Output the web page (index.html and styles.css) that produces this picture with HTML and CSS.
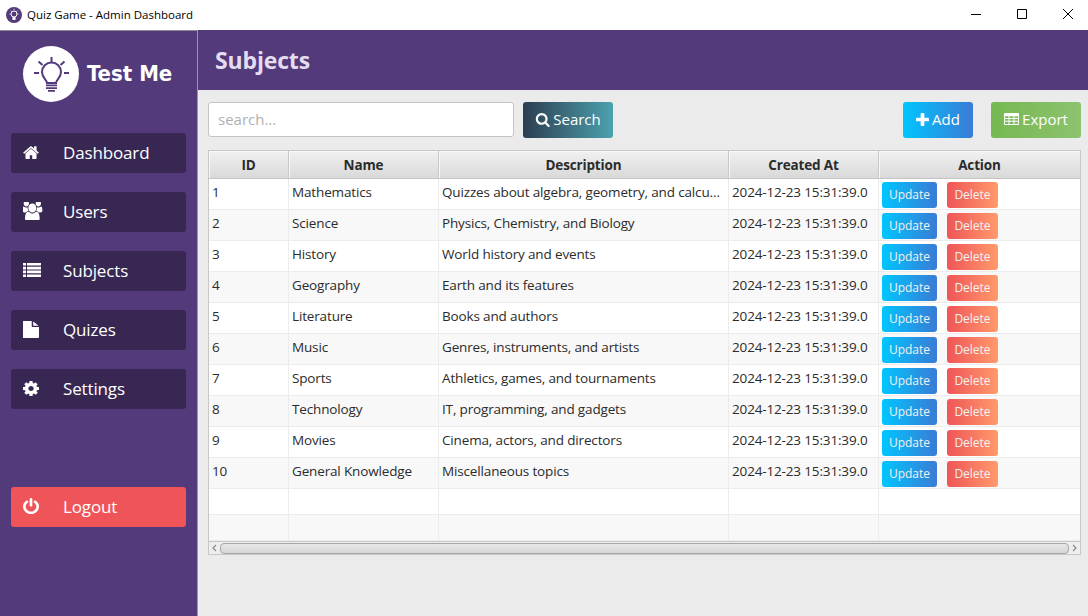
FILE: index.html
```html
<!DOCTYPE html>
<html>
  <head>
    <meta charset="utf-8" />
    <title>Quiz Game - Admin Dashboard</title>
    <link rel="stylesheet" href="styles.css">
  </head>
  <body>
    <svg class="sprite">
      <symbol id="i-home" viewBox="64 230 1664 1310" preserveAspectRatio="none"><path d="M1472 992v480q0 26-19 45t-45 19h-384v-384h-256v384h-384q-26 0-45-19t-19-45v-480q0-1 .5-3t.5-3l575-474 575 474q1 2 1 6zm223-69l-62 74q-8 9-21 11h-3q-13 0-21-7l-692-577-692 577q-12 8-24 7-13-2-21-11l-62-74q-8-10-7-23.500t11-21.500l719-599q32-26 76-26t76 26l244 204v-195q0-14 9-23t23-9h192q14 0 23 9t9 23v408l219 182q10 8 11 21.500t-7 23.500z"/></symbol>
      <symbol id="i-users" viewBox="0 128 1920 1536" preserveAspectRatio="none"><path d="M529 896q-162 5-265 128h-134q-82 0-138-40.500t-56-118.500q0-353 124-353 6 0 43.500 21t97.500 42.500 119 21.500q67 0 133-23-5 37-5 66 0 139 81 256zm1071 637q0 120-73 189.500t-194 69.500h-874q-121 0-194-69.500t-73-189.500q0-53 3.500-103.500t14-109 26.500-108.500 43-97.500 62-81 85.500-53.500 111.500-20q10 0 43 21.500t73 48 107 48 135 21.500 135-21.500 107-48 73-48 43-21.500q61 0 111.500 20t85.500 53.500 62 81 43 97.500 26.500 108.500 14 109 3.500 103.500zm-1024-1277q0 106-75 181t-181 75-181-75-75-181 75-181 181-75 181 75 75 181zm704 384q0 159-112.500 271.500t-271.500 112.500-271.500-112.500-112.500-271.500 112.500-271.500 271.500-112.500 271.500 112.500 112.500 271.500zm576 225q0 78-56 118.500t-138 40.500h-134q-103-123-265-128 81-117 81-256 0-29-5-66 66 23 133 23 59 0 119-21.500t97.500-42.500 43.500-21q124 0 124 353zm-128-609q0 106-75 181t-181 75-181-75-75-181 75-181 181-75 181 75 75 181z"/></symbol>
      <symbol id="i-list" viewBox="0 0 18 14" preserveAspectRatio="none"><path d="M0 0h3v2.600H0zM4 0h14v2.600H4zM0 3.800h3v2.600H0zM4 3.800h14v2.600H4zM0 7.600h3v2.600H0zM4 7.600h14v2.600H4zM0 11.400h3V14H0zM4 11.400h14V14H4z"/></symbol>
      <symbol id="i-file" viewBox="128 0 1408 1792" preserveAspectRatio="none"><path d="M1024 512v-472q22 14 36 28l408 408q14 14 28 36h-472zm-128 32q0 40 28 68t68 28h544v1056q0 40-28 68t-68 28h-1344q-40 0-68-28t-28-68v-1600q0-40 28-68t68-28h800v544z"/></symbol>
      <symbol id="i-cog" viewBox="128 128 1536 1536" preserveAspectRatio="none"><path d="M1152 896q0-106-75-181t-181-75-181 75-75 181 75 181 181 75 181-75 75-181zm512-109v222q0 12-8 23t-20 13l-185 28q-19 54-39 91 35 50 107 138 10 12 10 25t-9 23q-27 37-99 108t-94 71q-12 0-26-9l-138-108q-44 23-91 38-16 136-29 186-7 28-36 28h-222q-14 0-24.500-8.500t-11.500-21.500l-28-184q-49-16-90-37l-141 107q-10 9-25 9-14 0-25-11-126-114-165-168-7-10-7-23 0-12 8-23 15-21 51-66.500t54-70.500q-27-50-41-99l-183-27q-13-2-21-12.500t-8-23.500v-222q0-12 8-23t19-13l186-28q14-46 39-92-40-57-107-138-10-12-10-24 0-10 9-23 26-36 98.500-107.500t94.500-71.500q13 0 26 10l138 107q44-23 91-38 16-136 29-186 7-28 36-28h222q14 0 24.500 8.500t11.500 21.500l28 184q49 16 90 37l142-107q9-9 24-9 13 0 25 10 129 119 165 170 7 8 7 22 0 12-8 23-15 21-51 66.500t-54 70.500q26 50 41 98l183 28q13 2 21 12.500t8 23.500z"/></symbol>
      <symbol id="i-power" viewBox="128 0 1536 1664" preserveAspectRatio="none"><path d="M1664 896q0 156-61 298t-164 245-245 164-298 61-298-61-245-164-164-245-61-298q0-182 80.500-343t226.500-270q43-32 95.500-25t83.500 50q32 42 24.500 94.500t-49.500 84.500q-98 74-151.500 181t-53.500 228q0 104 40.500 198.500t109.500 163.500 163.500 109.500 198.500 40.500 198.500-40.500 163.500-109.500 109.500-163.500 40.500-198.500q0-121-53.500-228t-151.500-181q-42-32-49.500-84.500t24.500-94.500q31-43 84-50t95 25q146 109 226.500 270t80.500 343zm-640-768v640q0 52-38 90t-90 38-90-38-38-90v-640q0-52 38-90t90-38 90 38 38 90z"/></symbol>
      <symbol id="i-search" viewBox="0 0 1728 1792"><path d="M1216 832q0-185-131.500-316.500t-316.500-131.500-316.500 131.500-131.500 316.500 131.500 316.500 316.500 131.500 316.500-131.500 131.500-316.500zm512 832q0 52-38 90t-90 38q-54 0-90-38l-343-342q-179 124-399 124-143 0-273.500-55.500t-225-150-150-225-55.500-273.500 55.500-273.500 150-225 225-150 273.500-55.500 273.500 55.500 225 150 150 225 55.500 273.500q0 220-124 399l343 343q37 37 37 90z"/></symbol>
      <symbol id="i-plus" viewBox="0 0 14 14" preserveAspectRatio="none"><path d="M5 1q0-1 1-1h2q1 0 1 1v4h4q1 0 1 1v2q0 1-1 1H9v4q0 1-1 1H6q-1 0-1-1V9H1q-1 0-1-1V6q0-1 1-1h4z"/></symbol>
      <symbol id="i-table" viewBox="0 0 15 13" preserveAspectRatio="none"><path fill-rule="evenodd" d="M1 0h13q1 0 1 1v11q0 1-1 1H1q-1 0-1-1V1q0-1 1-1zM1 3.500v2h3.500v-2zM5.500 3.500v2h4v-2zM10.500 3.500v2H14v-2zM1 6.500v2h3.500v-2zM5.500 6.500v2h4v-2zM10.500 6.500v2H14v-2zM1 9.500v2.500h3.500V9.500zM5.500 9.500v2.500h4V9.500zM10.500 9.500v2.500H14V9.500z"/></symbol>
    </svg>

    <div class="app">
      <div class="titlebar">
        <div class="titlebar-left">
          <svg class="app-icon" viewBox="0 0 16 16">
            <circle cx="8" cy="8" r="8" fill="#533a7b"/>
            <circle cx="8" cy="7" r="3" fill="none" stroke="#fff" stroke-width="1"/>
            <path d="M6.800 10.500h2.400v2H6.800zM8 1.800v1.400M3.400 7h1.200M11.400 7h1.200M4.600 3.600l.9.9M11.400 3.600l-.9.9" stroke="#fff" stroke-width=".8" fill="#fff"/>
          </svg>
          <span>Quiz Game - Admin Dashboard</span>
        </div>
        <div class="window-controls">
          <svg viewBox="0 0 46 30"><path d="M21 14.500h10" stroke="#000" fill="none"/></svg>
          <svg viewBox="0 0 46 30"><path d="M21.500 9.500h9v9h-9z" stroke="#000" fill="none"/></svg>
          <svg viewBox="0 0 46 30"><path d="M21 9l10 10M31 9L21 19" stroke="#000" fill="none"/></svg>
        </div>
      </div>

      <div class="main">
        <aside class="sidebar">
          <div class="brand">
            <div class="brand-logo">
              <svg viewBox="0 0 56 56">
                <path d="M24 37c0-3-5-5-5-11a9.500 9.500 0 0 1 19 0c0 6-5 8-5 11z" fill="none" stroke="#533a7b" stroke-width="2"/>
                <path d="M23 38.500h11v1.800H23zM23 41.300h11v1.800H23zM25 44h7v1.800h-7z" fill="#533a7b"/>
                <path d="M28.500 11v5M11 27h5M41 27h5M15.500 15.500l4 3.500M41.500 15.500l-4 3.500" stroke="#533a7b" stroke-width="2" fill="none"/>
              </svg>
            </div>
            <span class="brand-name">Test Me</span>
          </div>
          <nav class="nav">
            <a class="nav-btn"><svg class="nav-icon icon-home"><use href="#i-home"/></svg>Dashboard</a>
            <a class="nav-btn"><svg class="nav-icon icon-users"><use href="#i-users"/></svg>Users</a>
            <a class="nav-btn"><svg class="nav-icon icon-list"><use href="#i-list"/></svg>Subjects</a>
            <a class="nav-btn"><svg class="nav-icon icon-file"><use href="#i-file"/></svg>Quizes</a>
            <a class="nav-btn"><svg class="nav-icon icon-cog"><use href="#i-cog"/></svg>Settings</a>
            <a class="nav-btn logout"><svg class="nav-icon icon-power"><use href="#i-power"/></svg>Logout</a>
          </nav>
        </aside>

        <section class="content">
          <header class="page-header"><h1>Subjects</h1></header>
          <div class="body">
            <div class="toolbar">
              <input class="search-input" type="text" placeholder="search...">
              <button class="btn btn-search"><svg class="btn-icon"><use href="#i-search"/></svg>Search</button>
              <button class="btn btn-add"><svg class="btn-icon icon-plus"><use href="#i-plus"/></svg>Add</button>
              <button class="btn btn-export"><svg class="btn-icon icon-table"><use href="#i-table"/></svg>Export</button>
            </div>

            <div class="table-wrap">
              <table class="data-table">
                <colgroup>
                  <col class="col-id"><col class="col-name"><col class="col-desc"><col class="col-date"><col>
                </colgroup>
                <thead>
                  <tr><th>ID</th><th>Name</th><th>Description</th><th>Created At</th><th>Action</th></tr>
                </thead>
                <tbody>
                  <tr><td>1</td><td>Mathematics</td><td>Quizzes about algebra, geometry, and calculus</td><td>2024-12-23 15:31:39.0</td><td class="actions"><button class="mini update">Update</button><button class="mini delete">Delete</button></td></tr>
                  <tr><td>2</td><td>Science</td><td>Physics, Chemistry, and Biology</td><td>2024-12-23 15:31:39.0</td><td class="actions"><button class="mini update">Update</button><button class="mini delete">Delete</button></td></tr>
                  <tr><td>3</td><td>History</td><td>World history and events</td><td>2024-12-23 15:31:39.0</td><td class="actions"><button class="mini update">Update</button><button class="mini delete">Delete</button></td></tr>
                  <tr><td>4</td><td>Geography</td><td>Earth and its features</td><td>2024-12-23 15:31:39.0</td><td class="actions"><button class="mini update">Update</button><button class="mini delete">Delete</button></td></tr>
                  <tr><td>5</td><td>Literature</td><td>Books and authors</td><td>2024-12-23 15:31:39.0</td><td class="actions"><button class="mini update">Update</button><button class="mini delete">Delete</button></td></tr>
                  <tr><td>6</td><td>Music</td><td>Genres, instruments, and artists</td><td>2024-12-23 15:31:39.0</td><td class="actions"><button class="mini update">Update</button><button class="mini delete">Delete</button></td></tr>
                  <tr><td>7</td><td>Sports</td><td>Athletics, games, and tournaments</td><td>2024-12-23 15:31:39.0</td><td class="actions"><button class="mini update">Update</button><button class="mini delete">Delete</button></td></tr>
                  <tr><td>8</td><td>Technology</td><td>IT, programming, and gadgets</td><td>2024-12-23 15:31:39.0</td><td class="actions"><button class="mini update">Update</button><button class="mini delete">Delete</button></td></tr>
                  <tr><td>9</td><td>Movies</td><td>Cinema, actors, and directors</td><td>2024-12-23 15:31:39.0</td><td class="actions"><button class="mini update">Update</button><button class="mini delete">Delete</button></td></tr>
                  <tr><td>10</td><td>General Knowledge</td><td>Miscellaneous topics</td><td>2024-12-23 15:31:39.0</td><td class="actions"><button class="mini update">Update</button><button class="mini delete">Delete</button></td></tr>
                  <tr class="empty"><td></td><td></td><td></td><td></td><td></td></tr>
                  <tr class="empty"><td></td><td></td><td></td><td></td><td></td></tr>
                </tbody>
              </table>
              <div class="hscroll">
                <svg class="arrow" viewBox="0 0 6 8"><path d="M4.500 1L1.500 4l3 3" fill="none" stroke="#8a8a8a" stroke-width="1.200"/></svg>
                <div class="thumb"></div>
                <svg class="arrow" viewBox="0 0 6 8"><path d="M1.500 1l3 3-3 3" fill="none" stroke="#8a8a8a" stroke-width="1.200"/></svg>
              </div>
            </div>
          </div>
        </section>
      </div>
    </div>
  </body>
</html>
```

FILE: styles.css
```css
html, body {
  margin:0;
  padding:0;
  height:100%;
  overflow:hidden;
  font-family:"Open Sans", "Noto Sans", sans-serif;
  color:#2b2b2b;
}

.sprite {
  display:none;
}

svg {
  fill:currentColor;
}

.app {
  display:flex;
  flex-direction:column;
  height:616px;
}

.titlebar {
  display:flex;
  justify-content:space-between;
  height:30px;
  background-color:#fff;
  color:#000;
  font-size:11.5px;
}

.titlebar-left {
  display:flex;
  align-items:center;
  gap:5px;
  padding:0 0 1px 6px;
}

.app-icon {
  width:16px;
  height:16px;
}

.window-controls {
  display:flex;
}

.window-controls svg {
  width:46px;
  height:30px;
}

.main {
  display:flex;
  flex:1;
  min-height:0;
}

/* sidebar */
.sidebar {
  width:197px;
  background-color:#533a7b;
  border-right:1px solid #9b9b9b;
  border-top:1px solid #8a8a8a;
  height:585px;
}

.brand {
  display:flex;
  align-items:center;
  gap:8px;
  padding:15px 0 0 23px;
  height:56px;
}

.brand-logo {
  width:56px;
  height:56px;
  border-radius:50%;
  background-color:#fff;
}

.brand-logo svg {
  display:block;
  width:56px;
  height:56px;
}

.brand-name {
  font-family:"DejaVu Sans", sans-serif;
  font-size:22px;
  font-weight:bold;
  font-stretch:condensed;
  color:#fff;
  padding-bottom:2px;
}

.nav {
  display:flex;
  flex-direction:column;
  gap:19px;
  padding:31px 11px 0 11px;
}

.nav-btn {
  display:grid;
  grid-template-columns:40px 1fr;
  align-items:center;
  height:40px;
  padding:0 0 2px 12px;
  box-sizing:border-box;
  background-color:#382752;
  border-radius:3px;
  color:#fff;
  font-size:17px;
  letter-spacing:-0.15px;
}

.nav-icon {
  width:16px;
  height:16px;
}

.icon-home { width:16px; height:13px; }
.icon-users { width:20px; height:18px; }
.icon-list { width:18px; height:14px; }
.icon-file { width:16px; height:17px; }
.icon-cog { width:16px; height:15px; }

.logout {
  margin-top:59px;
  background-color:#ef5558;
}

/* main area */
.content {
  flex:1;
  display:flex;
  flex-direction:column;
  background-color:#ebebeb;
}

.page-header {
  display:flex;
  align-items:center;
  height:60px;
  padding:0 0 1px 17px;
  box-sizing:border-box;
  background-color:#533a7b;
}

h1 {
  margin:0;
  font-size:23px;
  font-weight:bold;
  letter-spacing:-0.15px;
  color:#e4dcef;
}

.body {
  padding:12px 7px 0 10px;
}

.toolbar {
  display:flex;
  align-items:flex-start;
  height:36px;
  margin-bottom:12px;
}

.search-input {
  width:306px;
  height:35px;
  box-sizing:border-box;
  padding:0 9px 2px 9px;
  border:1px solid #c4c4c4;
  border-radius:3px;
  font-family:inherit;
  font-size:15px;
  outline:none;
}

.search-input::placeholder {
  color:#b0b0b0;
}

.btn {
  display:flex;
  align-items:center;
  justify-content:center;
  height:36px;
  padding:0 0 2px 0;
  border:none;
  border-radius:3px;
  color:#fff;
  font-family:inherit;
  font-size:15px;
}

.btn-icon {
  width:15px;
  height:15px;
  margin-right:3px;
}

.icon-plus { width:13px; height:13px; }
.icon-table { width:15px; height:12px; }

.btn-search {
  width:90px;
  margin-left:9px;
  background:linear-gradient(to right, #2c3e50, #4ca1af);
}

.btn-add {
  width:70px;
  margin-left:auto;
  background:linear-gradient(to right, #00c6ff, #3a7bd5);
}

.btn-export {
  width:90px;
  margin-left:18px;
  background:linear-gradient(to right, #76b852, #8dc26f);
}

/* table */
.table-wrap {
  width:873px;
  box-sizing:border-box;
  border:1px solid #c8c8c8;
  background-color:#fff;
}

.data-table {
  width:871px;
  table-layout:fixed;
  border-collapse:separate;
  border-spacing:0;
  font-size:13.5px;
  letter-spacing:-0.15px;
}

.col-id { width:80px; }
.col-name { width:150px; }
.col-desc { width:290px; }
.col-date { width:150px; }

.data-table th {
  height:28px;
  padding:0;
  box-sizing:border-box;
  background:linear-gradient(to bottom, #f1f1f1, #d9d9d9);
  border-right:1px solid #c8c8c8;
  border-bottom:1px solid #c4c4c4;
  box-shadow:inset 1px 1px 0 #f8f8f8;
  font-weight:bold;
}

.data-table th:last-child,
.data-table td:last-child {
  border-right:none;
}

.data-table td {
  height:31px;
  box-sizing:border-box;
  padding:0 5px 5px 3px;
  border-right:1px solid #ececec;
  border-bottom:1px solid #ececec;
  white-space:nowrap;
  overflow:hidden;
  text-overflow:ellipsis;
}

.data-table tbody tr:nth-child(even) td {
  background-color:#f8f8f8;
}

.data-table tr.empty td {
  height:26px;
  padding:0;
}

.data-table td.actions {
  padding:1px 0 0 3px;
  text-overflow:clip;
}

.mini {
  height:26px;
  padding:0;
  border:none;
  border-radius:3px;
  color:#f2f2f2;
  font-family:inherit;
  font-size:12px;
  vertical-align:middle;
}

.update {
  width:55px;
  background:linear-gradient(to right, #00c6ff, #3a7bd5);
}

.delete {
  width:51px;
  margin-left:10px;
  background:linear-gradient(to right, #ef5558, #ff9a6b);
}

.hscroll {
  display:flex;
  align-items:center;
  height:12px;
  background-color:#eeeeee;
  border-top:1px solid #c8c8c8;
}

.arrow {
  flex:none;
  width:11px;
  height:8px;
}

.thumb {
  flex:1;
  height:9px;
  border:1px solid #a8a8a8;
  border-radius:4px;
  background:linear-gradient(to bottom, #e8e8e8, #d6d6d6);
}
```
